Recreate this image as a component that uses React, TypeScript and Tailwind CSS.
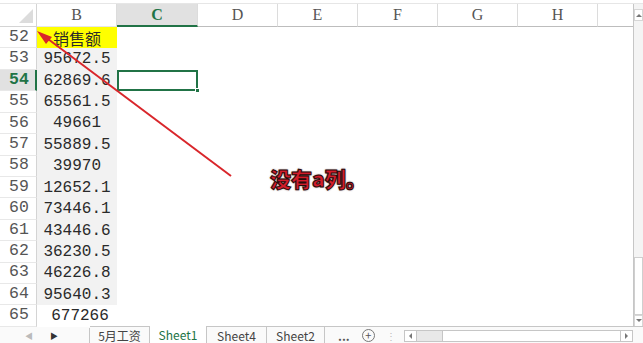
const cols = [
  { k: 'B', w: 'w-[80px]' },
  { k: 'C', w: 'w-[81px]' },
  { k: 'D', w: 'w-[80px]' },
  { k: 'E', w: 'w-[80px]' },
  { k: 'F', w: 'w-[80px]' },
  { k: 'G', w: 'w-[80px]' },
  { k: 'H', w: 'w-[80px]' },
];

const rows: { n: number; v: string }[] = [
  { n: 52, v: '销售额' },
  { n: 53, v: '95672.5' },
  { n: 54, v: '62869.6' },
  { n: 55, v: '65561.5' },
  { n: 56, v: '49661' },
  { n: 57, v: '55889.5' },
  { n: 58, v: '39970' },
  { n: 59, v: '12652.1' },
  { n: 60, v: '73446.1' },
  { n: 61, v: '43446.6' },
  { n: 62, v: '36230.5' },
  { n: 63, v: '46226.8' },
  { n: 64, v: '95640.3' },
  { n: 65, v: '677266' },
];

const mono = "font-['Liberation_Mono',monospace]";
const cjk = "font-['Noto_Sans_CJK_SC',sans-serif]";

function Row({ n, v }: { n: number; v: string }) {
  const active = n === 54;
  let bcls = 'bg-[#f2f2f2]';
  if (n === 52) bcls = 'bg-[#ffff00]';
  if (n === 65) bcls = 'bg-white';
  return (
    <div className="flex h-[21.43px]">
      <div
        className={`w-[37px] shrink-0 flex items-center pl-[9px] text-[16.5px] ${mono} border-b border-[#e8e8e8] ${
          active ? 'bg-[#e1e1e1] text-[#217346] font-semibold border-r-2 border-r-[#217346]' : 'bg-white text-[#555] border-r border-r-[#d4d4d4]'
        }`}
      >
        {n}
      </div>
      <div
        className={`w-[80px] shrink-0 flex items-center justify-center text-[16px] text-[#2a2a2a] ${bcls} ${
          n === 52 ? `${cjk} text-[16px]` : mono
        } ${n === 65 ? 'pl-[6px]' : ''}`}
      >
        {v}
      </div>
      <div className="w-[81px] shrink-0 relative">
        {active && (
          <div className="absolute inset-0 border-2 border-[#217346]">
            <div className="absolute -right-[4px] -bottom-[4px] w-[5px] h-[5px] bg-[#217346] border border-white" />
          </div>
        )}
      </div>
      <div className="flex-1" />
    </div>
  );
}

export default function App() {
  return (
    <div className="w-[643px] h-[343px] bg-white relative overflow-hidden flex flex-col">
      <div className="h-[4px] shrink-0 border-b border-[#e6e6e6]" />
      <div className="flex h-[323px]">
        {/* grid */}
        <div className="w-[634px] flex flex-col border-r border-[#c6c6c6]">
          <div className="flex h-[23px] shrink-0">
            <div className="w-[37px] shrink-0 border-r border-[#d4d4d4] border-b border-b-[#d4d4d4] flex items-end justify-end">
              <div className="w-0 h-0 border-l-[14px] border-l-transparent border-b-[14px] border-b-[#dcdcdc] mr-[3px] mb-[3px]" />
            </div>
            {cols.map(c => (
              <div
                key={c.k}
                className={`${c.w} shrink-0 flex items-center justify-center text-[16px] font-['Liberation_Serif',serif] border-r border-[#dcdcdc] ${
                  c.k === 'C'
                    ? 'bg-[#e1e1e1] text-[#217346] font-bold border-b-2 border-b-[#217346]'
                    : c.k === 'B'
                    ? 'text-[#555] border-b border-b-[#e6e6e6]'
                    : 'text-[#555] border-b border-b-[#bdbdbd]'
                }`}
              >
                {c.k}
              </div>
            ))}
            <div className="flex-1 border-b border-[#bdbdbd]" />
          </div>
          {rows.map(r => (
            <Row key={r.n} n={r.n} v={r.v} />
          ))}
        </div>
        {/* vertical scrollbar */}
        <div className="flex-1 flex flex-col bg-[#f4f4f4]">
          <div className="h-[12px] mt-[5px] flex items-center justify-center border border-[#d6d6d6] bg-white">
            <div className="w-0 h-0 border-l-[3px] border-r-[3px] border-b-[3px] border-l-transparent border-r-transparent border-b-[#777]" />
          </div>
          <div className="flex-1" />
          <div className="h-[58px] border border-[#cfcfcf] bg-white" />
          <div className="h-[12px] flex items-center justify-center border border-[#d6d6d6] bg-white">
            <div className="w-0 h-0 border-l-[3px] border-r-[3px] border-t-[3px] border-l-transparent border-r-transparent border-t-[#777]" />
          </div>
        </div>
      </div>

      {/* sheet tabs bar */}
      <div className={`flex-1 flex items-stretch text-[12px] ${cjk} text-[#444] bg-[#fafafa]`}>
        <div className="w-[90px] flex items-center border-r border-[#c6c6c6] my-[1px]">
          <span className="ml-[25px] text-[8px] text-[#bbb]">◀</span>
          <span className="ml-[17px] text-[8px] text-[#333]">▶</span>
        </div>
        <div className="w-[59px] flex items-center justify-center border-t border-[#c6c6c6] -mt-px">5月工资</div>
        <div className="w-[58px] flex items-center justify-center bg-white text-[#217346] border-x border-[#c6c6c6] -mt-px">
          Sheet1
        </div>
        <div className="w-[60px] flex items-center justify-center border-t border-r border-[#c6c6c6] -mt-px">Sheet4</div>
        <div className="w-[58px] flex items-center justify-center border-t border-r border-[#c6c6c6] -mt-px">Sheet2</div>
        <div className="flex-1 flex items-center border-t border-[#c6c6c6] -mt-px">
          <span className="ml-[13px] text-[#555] font-bold leading-none">...</span>
          <span className="ml-[12px] w-[13px] h-[13px] rounded-full border border-[#777] flex items-center justify-center text-[11px] leading-none text-[#555]">
            +
          </span>
          <span className="ml-[11px] text-[#bbb] text-[10px]">⋮</span>
          <div className="ml-[8px] w-[229px] h-[12px] flex border border-[#c6c6c6] bg-white">
            <div className="w-[12px] flex items-center justify-center border-r border-[#c6c6c6]">
              <div className="w-0 h-0 border-t-[3px] border-b-[3px] border-r-[3px] border-t-transparent border-b-transparent border-r-[#777]" />
            </div>
            <div className="w-[26px] bg-[#e8e8e8] border-r border-[#c6c6c6]" />
            <div className="flex-1" />
            <div className="w-[12px] flex items-center justify-center border-l border-[#c6c6c6]">
              <div className="w-0 h-0 border-t-[3px] border-b-[3px] border-l-[3px] border-t-transparent border-b-transparent border-l-[#777]" />
            </div>
          </div>
        </div>
      </div>

      {/* annotation arrow */}
      <svg className="absolute left-0 top-0 pointer-events-none" width="643" height="343">
        <line x1="231" y1="176" x2="44" y2="36" stroke="#d9262b" strokeWidth="2" />
        <polygon points="37,31 52,37 46,44" fill="#d9262b" />
      </svg>
      <div
        className={`absolute left-[270px] top-[163px] text-[21px] font-black text-[#d31c2a] ${cjk} [-webkit-text-stroke:1px_#2a0a0a] [text-shadow:0_0_2px_#3a0000]`}
      >
        没有a列。
      </div>
    </div>
  );
}
